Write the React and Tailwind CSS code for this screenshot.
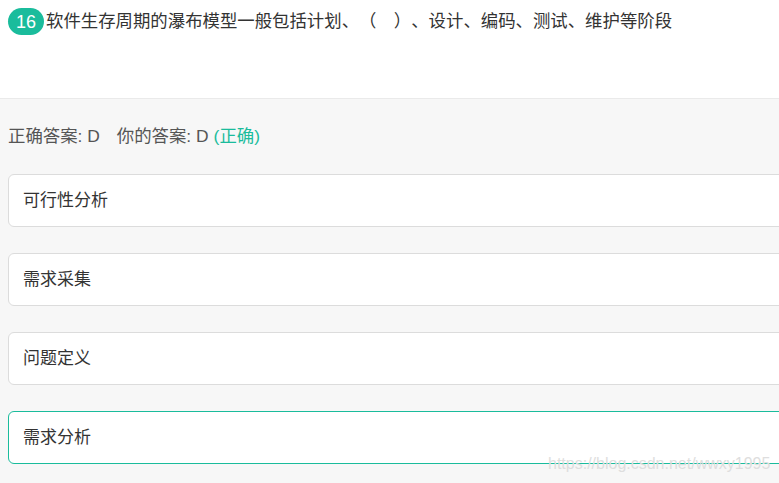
import React from "react";

const options = [
    { id: "A", text: "可行性分析" },
    { id: "B", text: "需求采集" },
    { id: "C", text: "问题定义" },
    { id: "D", text: "需求分析", selected: true },
];

function App() {
    return (
        <div
            className="relative w-[779px] h-[483px] overflow-hidden bg-white [text-spacing-trim:space-all]"
            style={{ fontFamily: '"Liberation Sans", "Noto Sans CJK SC", sans-serif' }}
        >
            <div className="h-[98px] flex items-start pt-[8px] pl-[8px]">
                <span className="w-[36px] h-[27px] rounded-full bg-[#1abc9c] text-white text-[18px] flex items-center justify-center leading-none">
                    16
                </span>
                <span className="ml-[2px] text-[17.4px] text-[#333] leading-[27px]">
                    软件生存周期的瀑布模型一般包括计划、（　）、设计、编码、测试、维护等阶段
                </span>
            </div>
            <div className="h-[385px] border-t border-[#eaeaea] bg-[#f7f7f7] pl-[8px]">
                <div className="h-[75px] flex items-center text-[17.4px] text-[#555]">
                    <span>正确答案: D</span>
                    <span className="ml-[17px]">你的答案: D</span>
                    <span className="ml-[5px] text-[#1abc9c]">(正确)</span>
                </div>
                <div className="flex flex-col gap-[26px]">
                    {options.map((opt) => (
                        <div
                            key={opt.id}
                            className={
                                "w-[800px] h-[53px] rounded-[6px] bg-white flex items-center pl-[14px] text-[17px] text-[#333] border " +
                                (opt.selected ? "border-[#1abc9c]" : "border-[#dcdcdc]")
                            }
                        >
                            {opt.text}
                        </div>
                    ))}
                </div>
            </div>
            <div className="absolute left-[548px] top-[456px] text-[16px] text-[#dedede] leading-none">
                https://blog.csdn.net/wwxy1995
            </div>
        </div>
    );
}

export default App;
